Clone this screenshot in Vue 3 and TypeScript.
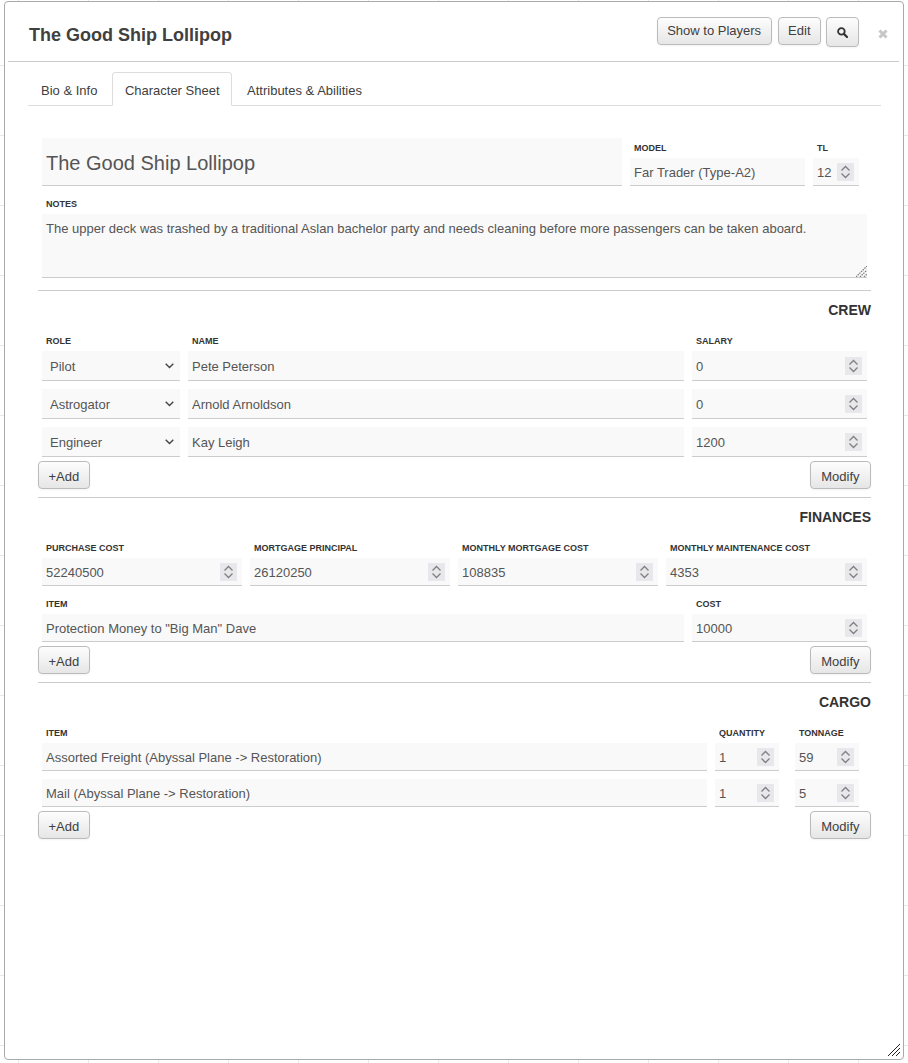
<script setup lang="ts">
import { ref } from 'vue'

interface CrewMember { role: string; name: string; salary: number }
interface CargoItem { item: string; quantity: number; tonnage: number }

const tabs = ['Bio & Info', 'Character Sheet', 'Attributes & Abilities']
const activeTab = ref('Character Sheet')
const roles = ['Pilot', 'Astrogator', 'Engineer']

const crew = ref<CrewMember[]>([
  { role: 'Pilot', name: 'Pete Peterson', salary: 0 },
  { role: 'Astrogator', name: 'Arnold Arnoldson', salary: 0 },
  { role: 'Engineer', name: 'Kay Leigh', salary: 1200 },
])

const finances = ref([
  { label: 'PURCHASE COST', value: 52240500 },
  { label: 'MORTGAGE PRINCIPAL', value: 26120250 },
  { label: 'MONTHLY MORTGAGE COST', value: 108835 },
  { label: 'MONTHLY MAINTENANCE COST', value: 4353 },
])

const cargo = ref<CargoItem[]>([
  { item: 'Assorted Freight (Abyssal Plane -> Restoration)', quantity: 1, tonnage: 59 },
  { item: 'Mail (Abyssal Plane -> Restoration)', quantity: 1, tonnage: 5 },
])

const notes = ref('The upper deck was trashed by a traditional Aslan bachelor party and needs cleaning before more passengers can be taken aboard.')
</script>

<template>
  <div class="dialog">
    <header class="titlebar">
      <h1 class="title">The Good Ship Lollipop</h1>
      <div class="actions">
        <button class="btn" type="button">Show to Players</button>
        <button class="btn btn-edit" type="button">Edit</button>
        <button class="btn btn-icon" type="button" aria-label="Search">
          <svg width="11" height="11" viewBox="0 0 11 11">
            <circle cx="4.4" cy="4.4" r="3.3" fill="none" stroke="#333" stroke-width="1.8" />
            <path d="M6.9 6.9 10 10" stroke="#333" stroke-width="2.2" stroke-linecap="round" />
          </svg>
        </button>
      </div>
      <button class="close" type="button" aria-label="Close">
        <svg width="10" height="10" viewBox="0 0 10 10">
          <path d="M1.5 1.5 8.5 8.5M8.5 1.5 1.5 8.5" stroke="#c6c6c6" stroke-width="3" />
        </svg>
      </button>
    </header>

    <nav class="tabs">
      <a
        v-for="tab in tabs"
        :key="tab"
        class="tab"
        :class="{ active: tab === activeTab }"
        @click="activeTab = tab"
      >{{ tab }}</a>
    </nav>

    <main class="sheet">
      <div class="grid grid-head">
        <label class="field">
          <input class="input input-name" type="text" value="The Good Ship Lollipop">
        </label>
        <label class="field">
          <span class="label">MODEL</span>
          <input class="input" type="text" value="Far Trader (Type-A2)">
        </label>
        <label class="field">
          <span class="label">TL</span>
          <input class="input" type="number" value="12">
        </label>
      </div>

      <label class="field notes">
        <span class="label">NOTES</span>
        <textarea v-model="notes" class="input textarea" />
        <!-- 文本框缩放手柄 -->
        <svg class="grip grip-notes" width="11" height="11" viewBox="0 0 11 11">
          <path d="M0 11 11 0M4 11 11 4M8 11 11 8" stroke="#777" stroke-width="1.3" stroke-dasharray="1.4 1" fill="none" />
        </svg>
      </label>

      <hr class="rule rule-first">
      <h2 class="section">CREW</h2>
      <div class="grid grid-crew labels">
        <span class="label">ROLE</span>
        <span class="label">NAME</span>
        <span class="label">SALARY</span>
      </div>
      <div class="rows">
        <div v-for="member in crew" :key="member.name" class="grid grid-crew">
          <select v-model="member.role" class="input select">
            <option v-for="role in roles" :key="role">{{ role }}</option>
          </select>
          <input v-model="member.name" class="input" type="text">
          <input v-model="member.salary" class="input" type="number">
        </div>
      </div>
      <div class="row-actions">
        <button class="btn" type="button">+Add</button>
        <button class="btn" type="button">Modify</button>
      </div>

      <hr class="rule">
      <h2 class="section">FINANCES</h2>
      <div class="grid grid-finance">
        <label v-for="entry in finances" :key="entry.label" class="field">
          <span class="label">{{ entry.label }}</span>
          <input v-model="entry.value" class="input" type="number">
        </label>
      </div>
      <div class="grid grid-expense">
        <label class="field">
          <span class="label">ITEM</span>
          <input class="input" type="text" value="Protection Money to &quot;Big Man&quot; Dave">
        </label>
        <label class="field">
          <span class="label">COST</span>
          <input class="input" type="number" value="10000">
        </label>
      </div>
      <div class="row-actions">
        <button class="btn" type="button">+Add</button>
        <button class="btn" type="button">Modify</button>
      </div>

      <hr class="rule">
      <h2 class="section">CARGO</h2>
      <div class="grid grid-cargo labels">
        <span class="label">ITEM</span>
        <span class="label">QUANTITY</span>
        <span class="label">TONNAGE</span>
      </div>
      <div class="rows rows-cargo">
        <div v-for="line in cargo" :key="line.item" class="grid grid-cargo">
          <input v-model="line.item" class="input" type="text">
          <input v-model="line.quantity" class="input" type="number">
          <input v-model="line.tonnage" class="input" type="number">
        </div>
      </div>
      <div class="row-actions">
        <button class="btn" type="button">+Add</button>
        <button class="btn" type="button">Modify</button>
      </div>
    </main>

    <!-- 窗口缩放手柄 -->
    <svg class="grip grip-window" width="12" height="12" viewBox="0 0 12 12" shape-rendering="crispEdges">
      <path d="M0 11h1M1 10h1M2 9h1M3 8h1M4 7h1M5 6h1M6 5h1M7 4h1M8 3h1M9 2h1M10 1h1M11 0h1" stroke="#222" />
      <path d="M4 11h1M5 10h1M6 9h1M7 8h1M8 7h1M9 6h1M10 5h1M11 4h1" stroke="#222" />
      <path d="M8 11h1M9 10h1M10 9h1M11 8h1" stroke="#222" />
    </svg>
  </div>
</template>

<style>
html,
body {
  height: 100%;
}

body {
  overflow: hidden;
  background-color: #fff;
  background-image:
    linear-gradient(to right, #e8e8e8 1px, transparent 1px),
    linear-gradient(to bottom, #e8e8e8 1px, transparent 1px);
  background-size: 70px 70px;
  background-position: 18px 65px;
}
</style>

<style scoped>
.dialog {
  position: relative;
  box-sizing: border-box;
  width: 900px;
  height: 1059px;
  margin: 1px 0 0 4px;
  background: #fff;
  border: 1px solid #aaa;
  border-radius: 4px;
  overflow: hidden;
  font-family: "Liberation Sans", Arial, sans-serif;
  font-size: 13px;
  color: #555;
}

/* 标题栏 */
.titlebar {
  display: flex;
  align-items: flex-start;
  height: 59px;
  margin: 0 4px 0 3px;
  border-bottom: 1px solid #ccc;
}

.title {
  margin: 0;
  padding: 21px 0 0 21px;
  font-size: 18px;
  line-height: 24px;
  font-weight: bold;
  color: #404040;
}

.actions {
  display: flex;
  align-items: flex-start;
  gap: 5px;
  margin: 15px 0 0 auto;
}

.close {
  margin: 27px 11px 0 19px;
  padding: 0;
  border: 0;
  background: none;
  line-height: 0;
}

/* 按钮 */
.btn {
  box-sizing: border-box;
  height: 28px;
  padding: 0 9.5px;
  font: 13px/26px "Liberation Sans", Arial, sans-serif;
  color: #404040;
  background: linear-gradient(to bottom, #fdfdfd, #e6e6e6);
  border: 1px solid #bbb;
  border-radius: 4px;
  box-shadow: 0 1px 2px rgba(0, 0, 0, 0.05);
}

.btn-edit {
  margin-left: 1px;
}

.btn-icon {
  display: flex;
  align-items: center;
  justify-content: center;
  width: 33px;
  height: 30px;
  padding: 0;
}

/* 标签页 */
.tabs {
  display: flex;
  gap: 2px;
  height: 33px;
  margin: 10px 22px 0 23px;
  border-bottom: 1px solid #ddd;
}

.tab {
  height: 34px;
  box-sizing: border-box;
  padding: 0 12px;
  line-height: 36px;
  border: 1px solid transparent;
  border-radius: 4px 4px 0 0;
  color: #404040;
}

.tab.active {
  padding: 0 11.5px;
  background: #fff;
  border-color: #ddd #ddd #fff;
}

/* 表单 */
.sheet {
  display: flex;
  flex-direction: column;
  padding: 32px 32px 0 33px;
}

.grid {
  display: grid;
  column-gap: 8px;
  margin-left: 4px;
}

.grid-head {
  grid-template-columns: 580px 175px 46px;
  align-items: end;
}

.grid-crew {
  grid-template-columns: 138px 496px 175px;
}

.grid-finance {
  grid-template-columns: 200px 200px 200px 201px;
}

.grid-expense {
  grid-template-columns: 642px 175px;
  margin-top: 8px;
}

.grid-cargo {
  grid-template-columns: 665px 64px 72px;
}

.grid-cargo > :last-child {
  width: 64px;
  margin-left: 8px;
}

.rows {
  display: flex;
  flex-direction: column;
  gap: 8px;
}

.field {
  display: flex;
  flex-direction: column;
  min-width: 0;
}

.label {
  display: block;
  padding-left: 4px;
  height: 20px;
  font-size: 9px;
  line-height: 20px;
  font-weight: bold;
  color: #333;
}

.input {
  box-sizing: border-box;
  width: 100%;
  height: 30px;
  margin: 0;
  padding: 2px 5px 0 4px;
  font: 13px "Liberation Sans", Arial, sans-serif;
  color: #555;
  background: #f9f9f9;
  border: 0;
  border-bottom: 1px solid #ccc;
  border-radius: 0;
  outline: 0;
}

.field .input,
.rows-cargo .input {
  height: 28px;
}

.field .input-name {
  height: 48px;
  padding-top: 3px;
  font-size: 20px;
}

.select {
  padding-left: 8px;
  appearance: none;
  background: #f9f9f9 url("data:image/svg+xml,%3Csvg xmlns='http://www.w3.org/2000/svg' width='9' height='6'%3E%3Cpath d='M.7.8 4.5 4.6 8.3.8' fill='none' stroke='%23444' stroke-width='1.4'/%3E%3C/svg%3E") no-repeat right 6px center;
}

.field .textarea {
  display: block;
  height: 64px;
  padding: 7px 4px;
  line-height: 15px;
  resize: none;
}

/* 数字输入框的上下箭头 */
.input[type="number"]::-webkit-inner-spin-button {
  appearance: none;
  width: 17px;
  height: 18px;
  margin-top: -2px;
  opacity: 1;
  background: #e8e8ec url("data:image/svg+xml,%3Csvg xmlns='http://www.w3.org/2000/svg' width='17' height='18'%3E%3Cpath d='M4.5 7.5 8.5 3.5 12.5 7.5M4.5 10.5 8.5 14.5 12.5 10.5' fill='none' stroke='%23808080' stroke-width='1.3'/%3E%3C/svg%3E") no-repeat center;
}

.notes {
  position: relative;
  margin: 8px 0 0 4px;
}

.notes .textarea {
  width: 825px;
}

.grip {
  position: absolute;
  pointer-events: none;
}

.grip-notes {
  right: 0;
  bottom: 1px;
  left: 814px;
}

.grip-window {
  right: 3px;
  bottom: 3px;
}

.rule {
  width: 100%;
  margin: 12px 0 0;
  border: 0;
  border-top: 1px solid #ccc;
}

.section {
  margin: 0;
  height: 40px;
  font-size: 14px;
  line-height: 38px;
  font-weight: bold;
  text-align: right;
  color: #333;
}

.labels {
  height: 20px;
  margin-top: 0;
}

.row-actions {
  display: flex;
  justify-content: space-between;
  margin: 4px 0 8px;
}

.row-actions .btn {
  padding-top: 2px;
}

.row-actions .btn:last-child {
  padding-left: 10.5px;
  padding-right: 10.5px;
}

.row-actions + .rule {
  margin-top: 0;
}
</style>
